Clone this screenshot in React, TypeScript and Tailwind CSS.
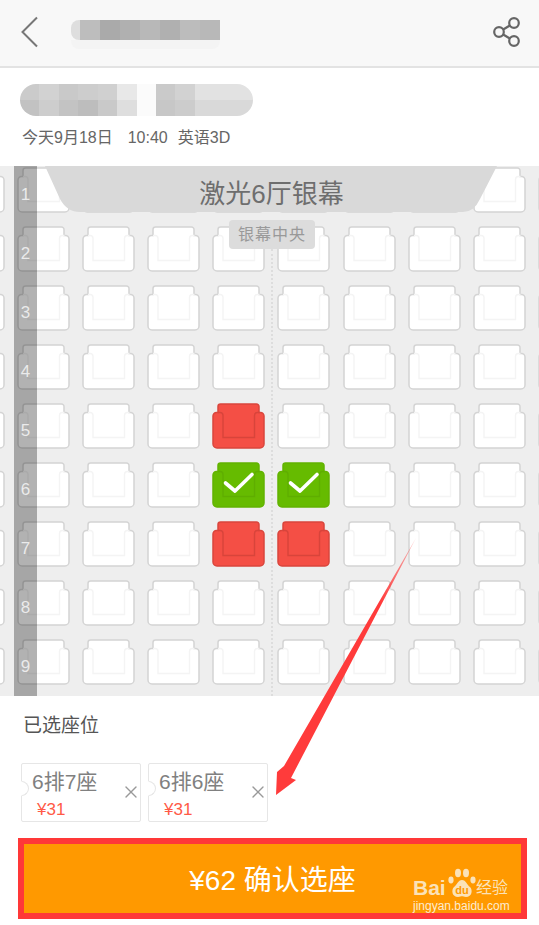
import { X } from "lucide-react";

type SeatKind = "free" | "sold" | "picked";

const titleBlur = [
  "w-[9px] bg-[#dedede] rounded-l-lg",
  "w-[20px] bg-[#bdbdbd]",
  "w-[20px] bg-[#aaaaaa]",
  "w-[20px] bg-[#b0b0b0]",
  "w-[20px] bg-[#b8b8b8]",
  "w-[20px] bg-[#b0b0b0]",
  "w-[20px] bg-[#bcbcbc]",
  "w-[20px] bg-[#b8b8b8]",
];

const nameBlurTop = [
  "bg-[#cbcbcb]", "bg-[#d2d2d2]", "bg-[#c9c9c9]", "bg-[#cdcdcd]", "bg-[#d0d0d0]", "bg-[#e8e8e8]",
  "bg-[#fbfbfb]", "bg-[#cacaca]", "bg-[#d2d2d2]", "bg-[#e2e2e2]", "bg-[#e2e2e2]", "bg-[#e2e2e2]",
];

const nameBlurBottom = [
  "bg-[#c2c2c2]", "bg-[#cdcdcd]", "bg-[#c3c3c3]", "bg-[#bdbdbd]", "bg-[#c9c9c9]", "bg-[#dedede]",
  "bg-[#fbfbfb]", "bg-[#c7c7c7]", "bg-[#cccccc]", "bg-[#d9d9d9]", "bg-[#d9d9d9]", "bg-[#d9d9d9]",
];

const rows = [1, 2, 3, 4, 5, 6, 7, 8, 9];
const cols = [0, 1, 2, 3, 4, 5, 6, 7, 8, 9];

const seatKind = (row: number, col: number): SeatKind => {
  if (row === 6 && (col === 4 || col === 5)) return "picked";
  if (row === 5 && col === 4) return "sold";
  if (row === 7 && (col === 4 || col === 5)) return "sold";
  return "free";
};

const seatColors = {
  free: { fill: "#ffffff", line: "#d4d4d4", inner: "#f4f4f4" },
  sold: { fill: "#f44f45", line: "#d9463d", inner: "#d8443b" },
  picked: { fill: "#66bb00", line: "#62b300", inner: "#5fae00" },
};

const Seat = ({ kind }: { kind: SeatKind }) => {
  const c = seatColors[kind];
  return (
    <svg width="53" height="46" viewBox="0 0 53 46" className="shrink-0">
      <path
        d="M6 9.5V3.5a2.5 2.5 0 0 1 2.5-2.5h36a2.5 2.5 0 0 1 2.5 2.5v6h1.5a3.5 3.5 0 0 1 3.5 3.5v28a4 4 0 0 1-4 4H5a4 4 0 0 1-4-4V13a3.5 3.5 0 0 1 3.5-3.5z"
        fill={c.fill}
        stroke={c.line}
        strokeWidth="1.5"
      />
      <path
        d="M6 9.5h2a3 3 0 0 1 3 3V34.5H42.5V12.5a3 3 0 0 1 3-3h2"
        fill="none"
        stroke={c.inner}
        strokeWidth="1.4"
      />
      {kind === "picked" && (
        <path
          d="M13.5 21L23 29L40 12.5"
          fill="none"
          stroke="#ffffff"
          strokeWidth="3.6"
          strokeLinecap="round"
          strokeLinejoin="round"
        />
      )}
    </svg>
  );
};

const Ticket = ({ name }: { name: string }) => (
  <div className="relative w-[120px] h-[59px] border border-[#e6e6e6] rounded-[2px]">
    <span className="absolute left-[-1px] top-[17px] w-[8px] h-[15px] rounded-r-full border border-[#e6e6e6] border-l-white bg-white" />
    <div className="pl-[10px] pt-[2px] text-[21px] leading-[32px] text-[#808080]">{name}</div>
    <div className="pl-[15px] pt-[1px] text-[17px] leading-[22px] text-[#ff5a46]">¥31</div>
    <X size={20} strokeWidth={1.6} className="absolute right-[-1px] top-[18px] text-[#999999]" />
  </div>
);

const BaiduMark = () => (
  <div className="absolute left-[389px] top-[20px] w-[104px] h-[56px] text-[#fbe2b8]">
    <div className="flex items-end h-[36px]">
      <span className="font-bold text-[21px] leading-[24px] w-[34px]">Bai</span>
      <svg width="29" height="33" viewBox="0 0 29 33" className="shrink-0">
        <ellipse cx="4" cy="13" rx="2.6" ry="3.4" fill="currentColor" />
        <ellipse cx="11" cy="6" rx="3" ry="4.2" fill="currentColor" />
        <ellipse cx="19" cy="6" rx="3" ry="4.2" fill="currentColor" />
        <ellipse cx="26" cy="13" rx="2.6" ry="3.4" fill="currentColor" />
        <path
          d="M15 13c4 0 5 5 8 7 3 3 2 10-4 10-2 0-3-.7-4-.7s-2 .7-4 .7c-6 0-7-7-4-10 3-2 4-7 8-7z"
          fill="currentColor"
        />
        <text x="15" y="27" textAnchor="middle" fontSize="11" fontWeight="700" fill="#ff9900" fontFamily="Liberation Sans">
          du
        </text>
      </svg>
      <span className="text-[16px] leading-[24px] whitespace-nowrap">经验</span>
    </div>
    <div className="text-[12px] leading-[16px] mt-[-2px] whitespace-nowrap text-[#fdebd0]">
      jingyan.baidu.com
    </div>
  </div>
);

export default function App() {
  return (
    <div className="relative w-[539px] h-[925px] overflow-hidden bg-white font-['Liberation_Sans','Noto_Sans_CJK_SC',sans-serif]">
      {/* header */}
      <header className="flex items-start justify-between h-[68px] bg-[#f8f8f8] border-b-2 border-[#e3e3e3] pl-[20px] pr-[16px]">
        <div className="flex items-start">
          <svg width="20" height="32" viewBox="0 0 20 32" className="mt-[16px]">
            <path d="M17 1.5L2.5 16L17 30.5" fill="none" stroke="#777777" strokeWidth="2" />
          </svg>
          <div className="ml-[31px] mt-[20px]">
            <div className="flex h-[20px]">
              {titleBlur.map((b, i) => (
                <div key={i} className={b} />
              ))}
            </div>
            <div className="h-[9px] w-[149px] bg-[#f4f4f4] rounded-b-lg" />
          </div>
        </div>
        <svg width="32" height="34" viewBox="0 0 32 34" className="mt-[14px]">
          <g fill="none" stroke="#666666" strokeWidth="2.2">
            <circle cx="23" cy="9" r="4.8" />
            <circle cx="8" cy="18" r="4.8" />
            <circle cx="23" cy="27" r="4.8" />
            <path d="M12.2 15.5L18.8 11.5M12.2 20.5L18.8 24.5" />
          </g>
        </svg>
      </header>

      {/* film info */}
      <section className="h-[98px] pl-[20px] pt-[16px]">
        <div className="w-[233px] h-[32px] rounded-[16px] overflow-hidden">
          <div className="flex h-[16px]">
            {nameBlurTop.map((b, i) => (
              <div key={i} className={`w-[20px] ${b}`} />
            ))}
          </div>
          <div className="flex h-[16px]">
            {nameBlurBottom.map((b, i) => (
              <div key={i} className={`w-[20px] ${b}`} />
            ))}
          </div>
        </div>
        <div className="flex pl-[2px] mt-[9px] text-[16px] leading-[26px] text-[#666666] whitespace-nowrap">
          <span className="mr-[15px]">今天9月18日</span>
          <span className="mr-[10px]">10:40</span>
          <span>英语3D</span>
        </div>
      </section>

      {/* seat map */}
      <section className="relative h-[530px] bg-[#eeeeee] overflow-hidden">
        <div className="flex flex-col gap-[13px] pt-[1px] ml-[-48.5px]">
          {rows.map((row) => (
            <div key={row} className="flex gap-[12.2px]">
              {cols.map((col) => (
                <Seat key={col} kind={seatKind(row, col)} />
              ))}
            </div>
          ))}
        </div>

        <div className="absolute left-[271px] top-[83px] bottom-0 border-l-2 border-dotted border-[#dddddd]" />

        <div className="absolute left-[14px] top-0 bottom-0 w-[23px] bg-black/30 flex flex-col items-center pt-[16px]">
          {rows.map((row) => (
            <div key={row} className="h-[59px] shrink-0 text-[17px] leading-[26px] text-white/75">
              {row}
            </div>
          ))}
        </div>

        {/* screen */}
        <svg width="453" height="47" viewBox="0 0 453 47" className="absolute left-[45px] top-0">
          <path d="M0 0H452L435 33Q429 46 418 46H35Q22 46 15 33Z" fill="#d9d9d9" />
        </svg>
        <div className="absolute left-0 right-0 top-[8px] pl-[4px] text-center text-[26px] leading-[40px] text-[#6e6e6e]">
          激光6厅银幕
        </div>
        <div className="absolute left-[229px] top-[54px] w-[86px] h-[29px] rounded-[4px] bg-[#dcdcdc] text-center text-[16px] leading-[30px] tracking-[1px] text-[#999999]">
          银幕中央
        </div>
      </section>

      {/* selected seats */}
      <section className="h-[229px] px-[21px]">
        <div className="pl-[2px] pt-[15px] text-[19px] leading-[30px] text-[#555555]">已选座位</div>
        <div className="flex gap-[7px] mt-[22px]">
          <Ticket name="6排7座" />
          <Ticket name="6排6座" />
        </div>
        <div className="relative ml-[-3px] mt-[16px] w-[509px] h-[81px] border-[6px] border-[#ff3838] bg-[#ff9900] flex items-center justify-center pt-[4px] text-[28px] text-white">
          <span>¥62 确认选座</span>
          <BaiduMark />
        </div>
      </section>

      {/* annotation arrow */}
      <svg width="539" height="925" viewBox="0 0 539 925" className="absolute left-0 top-0 pointer-events-none">
        <defs>
          <linearGradient id="arrowFade" x1="416" y1="538" x2="276" y2="795" gradientUnits="userSpaceOnUse">
            <stop offset="0" stopColor="#ff3b3b" stopOpacity="0.3" />
            <stop offset="0.25" stopColor="#ff3b3b" />
          </linearGradient>
        </defs>
        <polygon points="416,538 291,778 296,780 276,795 277,772 284,766" fill="url(#arrowFade)" />
      </svg>
    </div>
  );
}
